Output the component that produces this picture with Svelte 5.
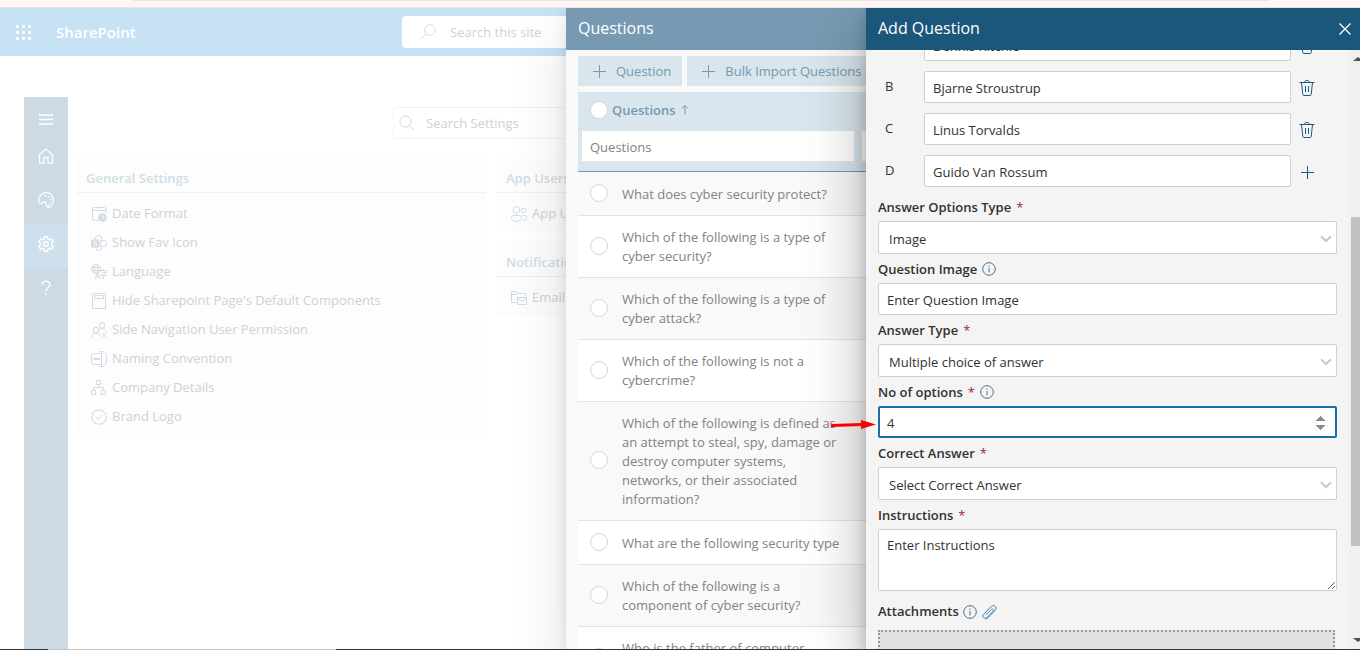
<script>
  const nav = [
    { id: 'menu', label: 'Menu' },
    { id: 'home', label: 'Home' },
    { id: 'palette', label: 'Theme' },
    { id: 'gear', label: 'Settings', active: true },
    { id: 'help', label: 'Help' }
  ];

  const cards = [
    [
      {
        title: 'General Settings',
        items: [
          ['date', 'Date Format'],
          ['fav', 'Show Fav Icon'],
          ['language', 'Language'],
          ['page', "Hide Sharepoint Page's Default Components"],
          ['people', 'Side Navigation User Permission'],
          ['rename', 'Naming Convention'],
          ['org', 'Company Details'],
          ['badge', 'Brand Logo']
        ]
      }
    ],
    [
      { title: 'App Users', items: [['users', 'App Users']] },
      { title: 'Notifications', items: [['mail', 'Email']] }
    ]
  ];

  const questions = [
    'What does cyber security protect?',
    'Which of the following is a type of cyber security?',
    'Which of the following is a type of cyber attack?',
    'Which of the following is not a cybercrime?',
    'Which of the following is defined as an attempt to steal, spy, damage or destroy computer systems, networks, or their associated information?',
    'What are the following security type',
    'Which of the following is a component of cyber security?',
    'Who is the father of computer security?'
  ];

  let options = $state([
    { key: 'A', value: 'Dennis Ritchie' },
    { key: 'B', value: 'Bjarne Stroustrup' },
    { key: 'C', value: 'Linus Torvalds' },
    { key: 'D', value: 'Guido Van Rossum' }
  ]);
  let count = $state(4);
</script>

{#snippet info()}
  <svg class="info" viewBox="0 0 14 14" width="14" height="14" aria-hidden="true">
    <circle cx="7" cy="7" r="6.3" />
    <path d="M7 6v4.4M7 3.6v1.2" />
  </svg>
{/snippet}

{#snippet plus()}
  <svg class="line" viewBox="0 0 14 14" width="14" height="14" aria-hidden="true"><path d="M7.5 1v13M1 7.5h13" /></svg>
{/snippet}

{#snippet chevron()}
  <svg class="chevron" viewBox="0 0 12 8" width="12" height="8" aria-hidden="true"><path d="M1 1.2l5 4.8 5-4.8" /></svg>
{/snippet}

{#snippet icon(id)}
  <svg class="line" viewBox="0 0 16 16" width="16" height="16" aria-hidden="true">
    {#if id === 'menu'}
      <path d="M1 4h14M1 8.5h14M1 13h14" stroke-width="1.300" />
    {:else if id === 'home'}
      <path d="M1.500 6.800L8 1l6.500 5.800V15.200H10V9.500H6v5.700H1.500z" stroke-width="1.300" />
    {:else if id === 'palette'}
      <path d="M.7 8.500C.7 4 4 .7 8.200.7c4.200 0 7.100 3.300 7.100 7.500 0 4-1.800 7.100-4.400 7.100-2 0-2.600-1.500-2.700-3.300-.1-1.700-.7-2.600-1.900-2.300-1.200.3-1.300 1.600-3 1.600C1.700 11.300.7 10.300.7 8.500z" stroke-width="1.300" />
      <path class="solid" d="M7 3h1.600v1.600H7zM10.200 4h1.600v1.600h-1.600zM11.800 6.700h1.600v1.600h-1.600zM11.600 9.700h1.600v1.600h-1.600zM10 12.200h1.600v1.500H10z" />
    {:else if id === 'gear'}
      <path d="M6.500.8h3l.5 2.100 1.500.9 2.100-.7 1.600 2.700-1.600 1.500v1.500l1.600 1.500-1.600 2.700-2.100-.7-1.500.9-.5 2.100h-3L6 13.200l-1.500-.9-2.100.7-1.600-2.700 1.600-1.500V7.300L.8 5.800l1.600-2.700 2.100.7L6 2.900z" stroke-width="1.500" />
      <circle cx="8" cy="8" r="2.300" stroke-width="1.500" />
    {:else if id === 'help'}
      <path d="M4.200 4.800C4.200 2.500 5.800 1.200 8 1.200s3.900 1.300 3.900 3.300c0 3-3.900 3.300-3.900 7M8 13.300v1.700" stroke-width="1.300" />
    {:else if id === 'date'}
      <path d="M7.500 14.500H3a1.500 1.500 0 0 1-1.500-1.500V3A1.500 1.500 0 0 1 3 1.500h10.500A1.500 1.500 0 0 1 15 3v4M1.500 4.500H15" />
      <circle class="solid" cx="11.500" cy="11.500" r="4.300" /><path class="cut" d="M11.500 9.300v2.400h2" />
    {:else if id === 'fav'}
      <circle cx="7.500" cy="4" r="3.500" /><circle cx="12.300" cy="8.500" r="3.200" /><circle cx="7.500" cy="13" r="2.600" />
      <path class="solid" d="M0 4.500h8v8H0z" /><path class="cut" d="M5.600 6.500H3.400a1 1 0 0 0 0 2h1.300a1 1 0 0 1 0 2H2.400" />
    {:else if id === 'language'}
      <circle cx="5" cy="5" r="4.500" /><ellipse cx="5" cy="5" rx="2" ry="4.500" /><path d="M.8 3.500h8.400M.8 6.500h7.500" />
      <path d="M4 15l2.500-7L9 15M5 13h3M12.500 5v1.500M9.500 8.500v-2h6v2M10.500 8.800h4l-2 2v3.700h-1.700M9.300 11.500h6.500" />
    {:else if id === 'page'}
      <path d="M1.500.5h13v15h-13zM3.500 2.500h9v3h-9z" />
    {:else if id === 'people'}
      <circle cx="11" cy="3.300" r="2.800" /><circle cx="5" cy="8" r="2.800" />
      <path d="M1 15.500c0-3 1.600-4.700 4-4.700s3.500 1.400 3.500 3.200M7.800 7.800c1.700-2 5.700-2 7.200 1.700M11 11l4.500 4.500M15.500 11L11 15.500" />
    {:else if id === 'rename'}
      <path d="M9 2.500H3a2.500 2.500 0 0 0-2.500 2.500v6A2.500 2.500 0 0 0 3 13.500h6M12.500 2.500A2.500 2.500 0 0 1 15.500 5v6a2.500 2.500 0 0 1-3 2.500M10.500 1v14M8.500.5h4M8.500 15.500h4" /><path d="M2.500 8h6.500" stroke-width="2" />
    {:else if id === 'org'}
      <path d="M5.500.5h4v4h-4zM.5 10.500h4v4h-4zM10.500 10.500h4v4h-4zM7.500 4.500v3M2.500 10.500v-3h10v3" />
    {:else if id === 'badge'}
      <path d="M8 .6l1.900 1 2.100-.2.900 1.900 1.900.9-.2 2.100 1 1.700-1 1.900.2 2.100-1.900.9-.9 1.900-2.100-.2-1.900 1-1.900-1-2.100.2-.9-1.900-1.900-.9.2-2.100-1-1.900 1-1.700-.2-2.100 1.900-.9.9-1.900 2.100.2zM5 8.200l2 2L11 6" />
    {:else if id === 'users'}
      <circle cx="5.500" cy="4" r="3.300" /><circle cx="12.700" cy="4.500" r="2.200" />
      <path d="M2.500 9.500h6.200c1.300 0 1.800.8 1.800 2 0 2.400-2 4-5 4s-5-1.600-5-4c0-1.200.7-2 2-2zM11.500 9.500h2.200c1.200 0 1.800.7 1.800 1.800 0 1.800-1.300 2.900-3.700 2.900" />
    {:else if id === 'mail'}
      <path d="M5 12.500H.5V1.500h5l1.500 2h8v3M.5 4.500h5l1.500-1M6.500 7.500h9v7h-9zM6.500 8l4.500 3.500L15.500 8" />
    {:else if id === 'search'}
      <circle cx="6.500" cy="6.500" r="5.500" /><path d="M10.500 10.500L15 15" />
    {:else if id === 'search-left'}
      <circle cx="10" cy="6" r="5.300" /><path d="M6.200 9.800L.6 15.400" />
    {:else if id === 'trash'}
      <path d="M.5 2.500h15M5.500 2.300C5.700.9 6.700.5 8 .5s2.300.4 2.500 1.800M2.500 2.500l1.300 12c.1.700.4 1 1 1h6.400c.6 0 .9-.3 1-1l1.300-12M6.500 6v6M9.500 6v6" />
    {:else if id === 'clip'}
      <path d="M5 10.800l5.300-5.300a1.200 1.200 0 0 1 1.800 1.800l-6.300 6.400c-2 2-5.400-1.100-3.300-3.300l7.700-7.900c2.800-2.800 6.600 1 3.900 3.800l-6.600 6.800c-.9.900-1.600 1.600-2.400 2" />
    {/if}
  </svg>
{/snippet}

<div class="screen">
  <div class="tabstrip"><span></span></div>

  <div class="stage">
    <div class="page">
      <header class="suite">
        <button class="waffle" aria-label="App launcher">
          {#each Array(9) as _}<i></i>{/each}
        </button>
        <a class="brand" href="#home">SharePoint</a>
        <label class="site-search">
          {@render icon('search-left')}
          <input type="search" placeholder="Search this site" aria-label="Search this site" />
        </label>
      </header>

      <div class="workspace">
        <nav class="rail">
          {#each nav as item}
            <button class:active={item.active} class:menu={item.id === 'menu'} aria-label={item.label}>{@render icon(item.id)}</button>
          {/each}
        </nav>
        <main class="settings">
          <label class="settings-search">
            {@render icon('search')}
            <input type="search" placeholder="Search Settings" aria-label="Search Settings" />
          </label>
          <div class="columns">
            {#each cards as column}
              <div class="column">
                {#each column as card}
                  <section class="card">
                    <h2>{card.title}</h2>
                    <ul>
                      {#each card.items as [id, text]}
                        <li><a href="#{id}">{@render icon(id)}{text}</a></li>
                      {/each}
                    </ul>
                  </section>
                {/each}
              </div>
            {/each}
          </div>
        </main>
      </div>
    </div>

    <section class="panel questions">
      <header class="panel-head"><h1>Questions</h1></header>
      <div class="questions-body">
        <div class="toolbar">
          <button>{@render plus()}Question</button>
          <button>{@render plus()}Bulk Import Questions</button>
        </div>
        <table>
          <colgroup><col class="col-pick" /><col class="col-text" /><col /></colgroup>
          <thead>
            <tr class="names">
              <th><input type="radio" name="all" aria-label="Select all" /></th>
              <th class="name">Questions
                <svg class="line" viewBox="0 0 8 12" width="8" height="12" aria-hidden="true"><path d="M4 1.500v9M1 4.500l3-3 3 3" /></svg>
              </th>
              <th></th>
            </tr>
            <tr class="filters">
              <td colspan="2"><input type="text" placeholder="Questions" aria-label="Filter questions" /></td>
              <td><input type="text" aria-label="Filter answer type" /></td>
            </tr>
          </thead>
          <tbody>
            {#each questions as q}
              <tr>
                <td class="pick"><input type="radio" name="question" aria-label={q} /></td>
                <td class="text">{q}</td>
                <td></td>
              </tr>
            {/each}
          </tbody>
        </table>
      </div>
    </section>

    <section class="panel add">
      <header class="panel-head">
        <h1>Add Question</h1>
        <button class="close" aria-label="Close">
          <svg class="line" viewBox="0 0 12 12" width="12" height="12" aria-hidden="true"><path d="M.5.5l11 11M11.500.5l-11 11" stroke-width="1.300" /></svg>
        </button>
      </header>
      <div class="add-body">
        <form onsubmit={(e) => e.preventDefault()}>
          <div class="options">
            {#each options as option, i}
              <div class="option">
                <label for="option-{option.key}">{option.key}</label>
                <input id="option-{option.key}" type="text" bind:value={option.value} />
                <button type="button" aria-label={i === 3 ? 'Add option' : 'Delete option'}>
                  {#if i === 3}{@render plus()}{:else}{@render icon('trash')}{/if}
                </button>
              </div>
            {/each}
          </div>

          <div class="label"><label for="options-type">Answer Options Type</label><b>*</b></div>
          <div class="select">
            <select id="options-type"><option>Image</option></select>{@render chevron()}
          </div>

          <div class="label"><label for="image">Question Image</label>{@render info()}</div>
          <input id="image" type="text" placeholder="Enter Question Image" />

          <div class="label"><label for="answer-type">Answer Type</label><b>*</b></div>
          <div class="select">
            <select id="answer-type"><option>Multiple choice of answer</option></select>{@render chevron()}
          </div>

          <div class="label"><label for="count">No of options</label><b>*</b>{@render info()}</div>
          <div class="count">
            <input id="count" type="number" bind:value={count} />
            <svg class="arrow" viewBox="0 0 46 12" width="46" height="12" aria-hidden="true">
              <path d="M2 7.500L32 6.500" /><polygon points="31,2 46,6.500 31,11" />
            </svg>
          </div>

          <div class="label"><label for="correct">Correct Answer</label><b>*</b></div>
          <div class="select">
            <select id="correct"><option>Select Correct Answer</option></select>{@render chevron()}
          </div>

          <div class="label"><label for="instructions">Instructions</label><b>*</b></div>
          <textarea id="instructions" placeholder="Enter Instructions"></textarea>

          <div class="label attach"><label for="files">Attachments</label>{@render info()}{@render icon('clip')}</div>
          <label class="drop"><input id="files" type="file" /></label>
        </form>
        <div class="scrollbar" aria-hidden="true">
          <i class="up"></i><i class="thumb"></i><i class="down"></i>
        </div>
      </div>
    </section>
  </div>

  <div class="taskbar"><span></span></div>
</div>

<style>
  :global(body) { margin: 0; }
  .screen, .screen * { box-sizing: border-box; }
  .screen {
    height: 100vh;
    display: flex;
    flex-direction: column;
    overflow: hidden;
    background: #fff;
    font: 13px/19px "Open Sans", "Noto Sans", sans-serif;
    color: #323130;
  }
  button, input, select, textarea { font: inherit; color: inherit; margin: 0; }
  button { border: 0; background: none; padding: 0; display: flex; align-items: center; justify-content: center; }
  a { color: inherit; text-decoration: none; }
  h1, h2, ul { margin: 0; padding: 0; list-style: none; }
  svg { flex: none; display: block; }
  .line { fill: none; stroke: currentColor; stroke-width: 1; }
  .line .solid { fill: currentColor; stroke: none; }
  .line .cut { stroke: #fdfdfd; }

  .tabstrip { flex: none; height: 8px; background: #fff6f5; border-bottom: 1px solid #f4dddb; }
  .tabstrip span { display: block; height: 1px; margin: 0 91px 0 132px; background: #f2e3e4; }
  .stage { flex: 1; min-height: 0; position: relative; overflow: hidden; }
  .taskbar { flex: none; height: 1px; background: #33382f; }
  .taskbar span { display: block; width: 288px; height: 1px; margin-left: 48px; background: #c4c4c4; }

  .page { height: 100%; display: flex; flex-direction: column; color: #d1d1d1; }
  .suite {
    flex: none; height: 48px; padding-left: 16px; background: #c7e2f5;
    display: grid; grid-template-columns: 40px 1fr minmax(0, 556px) 402px; align-items: center;
  }
  .waffle { width: 15px; display: grid; grid-template-columns: repeat(3, 3px); gap: 3px; }
  .waffle i { width: 3px; height: 3px; border-radius: 1px; background: #fff; }
  .brand { color: #fff; font-size: 15px; font-weight: 600; }
  .site-search { height: 32px; border-radius: 4px; background: #fff; display: flex; align-items: center; gap: 14px; padding: 0 18px; }
  .site-search svg { color: #c9dff0; }
  .site-search input, .settings-search input { flex: 1; min-width: 0; border: 0; padding: 1px 0 0; outline: 0; background: none; }
  .page input::placeholder { color: #d1d1d1; opacity: 1; }

  .workspace { flex: 1; display: flex; padding: 41px 34px 0 24px; gap: 8px; }
  .rail { flex: none; width: 44px; background: #cddae3; color: #fff; }
  .rail button { width: 100%; height: 44px; padding-bottom: 4px; }
  .rail .menu { height: 39px; padding: 5px 0 0; }
  .rail .active { background: #cde0ec; }
  .settings { flex: 1; padding-top: 10px; }
  .settings-search { height: 32px; max-width: 616px; margin: 0 auto 19px; border: 1px solid #f3f3f3; border-radius: 2px; display: flex; align-items: center; gap: 11px; padding: 0 5px; }
  .settings-search svg { color: #d0dbe4; }
  .columns { display: grid; grid-template-columns: repeat(3, 1fr); gap: 10px; }
  .column { display: flex; flex-direction: column; gap: 10px; }
  .card { background: #fdfdfd; padding-bottom: 1px; }
  .card h2 { height: 35px; padding: 11px 10px 0; border-bottom: 1px solid #f1f1f1; font-size: 13px; line-height: 19px; font-weight: 600; color: #d2dde6; }
  .card ul { padding: 6px 15px 3px; }
  .card a { height: 29px; display: flex; align-items: center; gap: 5px; white-space: nowrap; }
  .card svg { color: #d0dbe5; }

  .panel { position: absolute; top: 0; right: 0; bottom: 0; display: flex; flex-direction: column; }
  .panel-head { flex: none; height: 42px; padding: 0 12px; display: flex; align-items: center; color: #fff; }
  .panel-head h1 { flex: 1; font-size: 16px; line-height: 22px; font-weight: 400; padding-bottom: 2px; }

  .questions { width: 794px; max-width: 100%; background: #f9f9f9; color: #828282; box-shadow: 0 26px 58px rgba(0, 0, 0, .12), 0 5px 14px rgba(0, 0, 0, .1); }
  .questions .panel-head { background: #779ab2; }
  .questions-body { padding: 6px 12px 0; overflow: hidden; }
  .toolbar { display: flex; gap: 5px; margin-bottom: 6px; color: #7698b1; }
  .toolbar button { height: 30px; padding: 0 11px 0 14px; gap: 10px; background: #d9e6ed; }
  table { width: 100%; table-layout: fixed; border-collapse: separate; border-spacing: 0; }
  .col-pick { width: 34px; }
  .col-text { width: 246px; }
  th, td { padding: 0; text-align: left; vertical-align: middle; }
  thead { background: #d9e6ed; color: #7698b1; }
  .names th { height: 35px; font-weight: 600; }
  .names .name { padding-top: 1px; }
  .names .name svg { display: inline-block; margin-left: 2px; vertical-align: -1px; }
  .filters td { height: 45px; padding: 4px 4px 10px; border-bottom: 1px solid #7497af; }
  .filters input { display: block; width: 100%; height: 30px; border: 0; padding: 2px 8px 0; background: #fff; outline: 0; }
  .filters input::placeholder { color: #828282; opacity: 1; }
  input[type="radio"] { appearance: none; display: block; width: 18px; height: 18px; margin-left: 12px; border: 1px solid #d6d6d6; border-radius: 50%; background: #fff; }
  tbody td { height: 44px; padding: 12px 0 11px; border-bottom: 1px solid #e4e4e4; }
  tbody .pick { padding: 0 0 2px; }
  tbody .text { padding-left: 10px; padding-right: 10px; }
  tbody tr:nth-child(even) { background: #fff; }

  .add { width: 494px; max-width: 100%; background: #f4f4f4; box-shadow: 0 26px 58px rgba(0, 0, 0, .3), 0 5px 14px rgba(0, 0, 0, .2); }
  .add .panel-head { background: #1a577b; padding-right: 9px; }
  .add-body { flex: 1; min-height: 0; display: flex; overflow-x: visible; overflow-y: clip; }
  form { flex: 1; min-width: 0; padding: 0 12px; margin-top: -21px; }
  form input, select, textarea {
    display: block; width: 100%; height: 32px; border: 1px solid #cfcfcd; border-radius: 2px;
    background: #fff; padding: 2px 8px 0; outline: 0;
  }
  form input::placeholder, textarea::placeholder { color: #323130; opacity: 1; }
  .options { display: grid; gap: 10px; margin-bottom: 5px; }
  .option { display: grid; grid-template-columns: 46px 1fr 46px; align-items: center; }
  .option label { padding: 0 0 2px 7px; }
  .option button { width: 32px; height: 32px; padding-top: 2px; color: #1b5a80; }
  .label { height: 29px; display: flex; align-items: center; gap: 5px; font-weight: 600; padding-top: 1px; }
  .label b { color: #a4262c; font-weight: 400; }
  .label .info { fill: none; stroke: #47708f; stroke-width: 1; }
  .select { position: relative; }
  .select select { appearance: none; height: 33px; padding: 3px 28px 0 10px; }
  .chevron { position: absolute; right: 5px; top: 14px; fill: none; stroke: #c9c9c9; stroke-width: 2; pointer-events: none; }
  .count { position: relative; }
  .count input { border: 2px solid #1a6fa5; padding: 1px 7px 0; }
  .count input::-webkit-inner-spin-button { opacity: 1; }
  .arrow { position: absolute; left: -48px; top: 12px; fill: #f00; }
  .arrow path { stroke: #f00; stroke-width: 3; stroke-linecap: round; }
  textarea { height: 62px; padding: 6px 8px; resize: vertical; }
  .attach { height: 39px; padding-top: 2px; gap: 4px; }
  .attach .line { color: #3d7ba6; }
  .drop { display: block; height: 80px; margin-right: 2px; border: 2px dotted #9a9a9a; background: #e1e1e1; }
  .drop input { opacity: 0; }

  .scrollbar { flex: none; width: 11px; padding: 0 0 0 2px; background: #f0f0f0; display: flex; flex-direction: column; overflow: hidden; }
  .scrollbar i { flex: none; margin-left: 2px; border: 5px solid transparent; width: 10px; }
  .scrollbar .up { border-top-width: 0; border-bottom-color: #505050; margin-top: 7px; border-bottom-width: 4px; }
  .scrollbar .thumb { border: 0; width: 9px; margin: 156px 0 0; height: 55%; background: #c1c1c1; }
  .scrollbar .down { border-bottom-width: 0; border-top-color: #505050; margin-top: auto; margin-bottom: 7px; border-top-width: 4px; }
</style>
